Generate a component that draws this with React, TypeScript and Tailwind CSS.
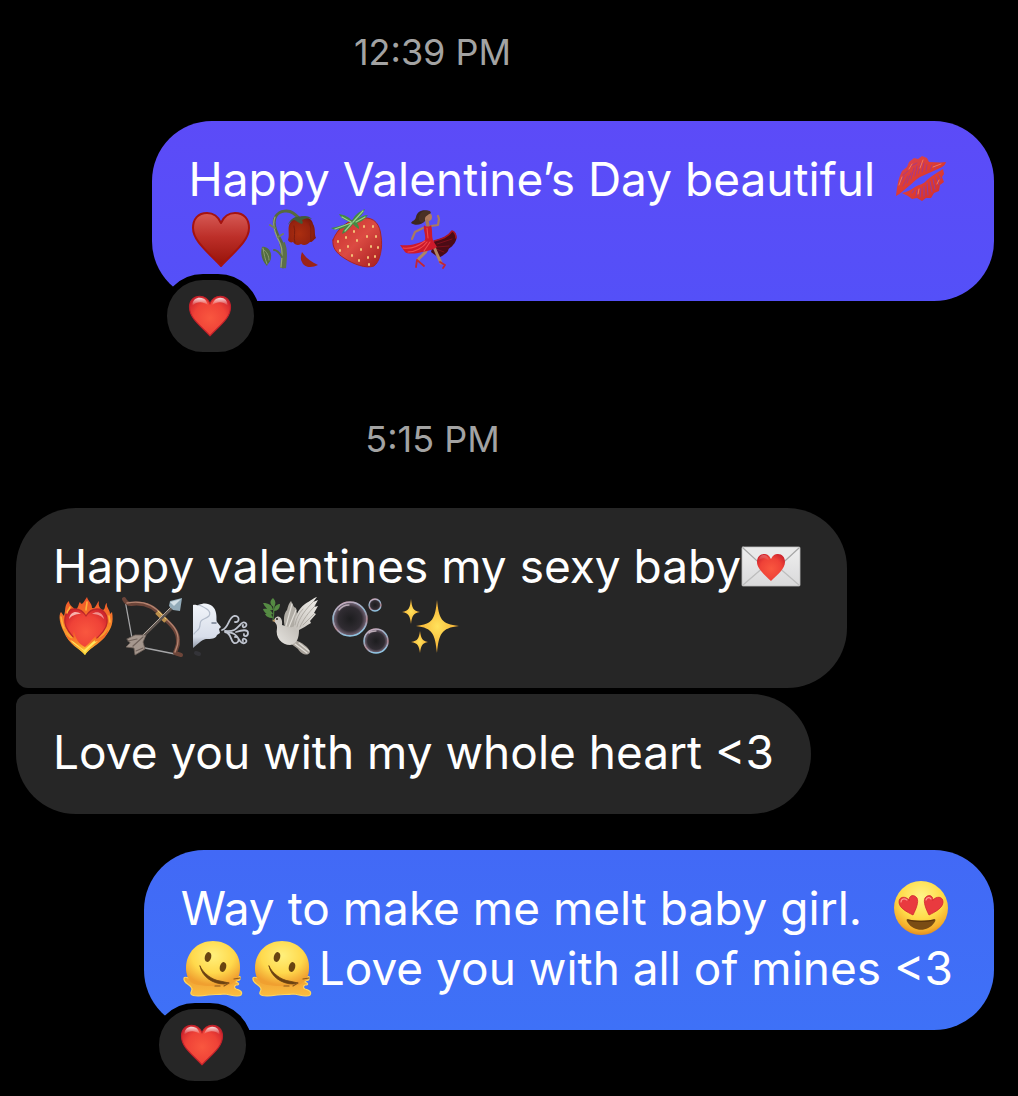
import type { ReactNode } from "react";

function Gradients() {
  return (
    <svg className="absolute size-0" aria-hidden="true">
      <defs>
        <linearGradient id="suit" x1="0" y1="0" x2="0" y2="1">
          <stop offset="0" stopColor="#d65a55" />
          <stop offset=".45" stopColor="#bd2f29" />
          <stop offset="1" stopColor="#961208" />
        </linearGradient>
        <radialGradient id="gloss" cx=".5" cy=".55" r=".65">
          <stop offset="0" stopColor="#f9573f" />
          <stop offset=".6" stopColor="#ef4237" />
          <stop offset="1" stopColor="#c9202b" />
        </radialGradient>
        <linearGradient id="shine" x1="0" y1="0" x2="0" y2="1">
          <stop offset="0" stopColor="#fff" stopOpacity=".85" />
          <stop offset="1" stopColor="#fff" stopOpacity="0" />
        </linearGradient>
        <radialGradient id="face" cx=".5" cy=".3" r=".72">
          <stop offset="0" stopColor="#fff58a" />
          <stop offset=".55" stopColor="#ffdc4a" />
          <stop offset=".85" stopColor="#f5ae2c" />
          <stop offset="1" stopColor="#dd8520" />
        </radialGradient>
        <radialGradient id="melt" cx=".5" cy=".32" r=".65">
          <stop offset="0" stopColor="#fff07c" />
          <stop offset=".6" stopColor="#ffd94c" />
          <stop offset="1" stopColor="#f0a030" />
        </radialGradient>
        <linearGradient id="puddle" x1="0" y1="0" x2="0" y2="1">
          <stop offset="0" stopColor="#efa032" />
          <stop offset="1" stopColor="#fbbd40" />
        </linearGradient>
        <linearGradient id="flame" x1="0" y1="0" x2="0" y2="1">
          <stop offset="0" stopColor="#f0532a" />
          <stop offset=".5" stopColor="#f98528" />
          <stop offset="1" stopColor="#ffe03a" />
        </linearGradient>
        <linearGradient id="berry" x1="0" y1="0" x2="1" y2="1">
          <stop offset="0" stopColor="#c92f2d" />
          <stop offset=".5" stopColor="#db4a42" />
          <stop offset="1" stopColor="#a51d1e" />
        </linearGradient>
        <linearGradient id="lips" x1="0" y1="0" x2="1" y2="1">
          <stop offset="0" stopColor="#d8485a" />
          <stop offset=".5" stopColor="#dd3b32" />
          <stop offset="1" stopColor="#c92d35" />
        </linearGradient>
        <radialGradient id="rose" cx=".4" cy=".6" r=".7">
          <stop offset="0" stopColor="#ab2e10" />
          <stop offset=".6" stopColor="#96230f" />
          <stop offset="1" stopColor="#6e150b" />
        </radialGradient>
        <radialGradient id="film" cx=".5" cy=".5" r=".5">
          <stop offset="0" stopColor="#1d1d1f" />
          <stop offset=".7" stopColor="#302c32" />
          <stop offset=".92" stopColor="#6b5d6c" />
          <stop offset="1" stopColor="#9cb9cf" />
        </radialGradient>
        <linearGradient id="rim" x1="0" y1="0" x2=".3" y2="1">
          <stop offset="0" stopColor="#d9a4b4" />
          <stop offset=".45" stopColor="#8eb8d0" />
          <stop offset=".75" stopColor="#b7848e" />
          <stop offset="1" stopColor="#8fc4e2" />
        </linearGradient>
        <linearGradient id="paper" x1="0" y1="0" x2="0" y2="1">
          <stop offset="0" stopColor="#efefef" />
          <stop offset="1" stopColor="#d9d9da" />
        </linearGradient>
        <linearGradient id="feather" x1="1" y1="0" x2="0" y2="1">
          <stop offset="0" stopColor="#f1efeb" />
          <stop offset=".6" stopColor="#c6c2bc" />
          <stop offset="1" stopColor="#e9e7e3" />
        </linearGradient>
        <linearGradient id="cloud" x1="0" y1="0" x2="0" y2="1">
          <stop offset="0" stopColor="#f2f5fa" />
          <stop offset=".75" stopColor="#d8deea" />
          <stop offset="1" stopColor="#8f98a6" />
        </linearGradient>
        <radialGradient id="gold" cx=".5" cy=".5" r=".5">
          <stop offset="0" stopColor="#ffe25c" />
          <stop offset="1" stopColor="#f6ac2f" />
        </radialGradient>
      </defs>
    </svg>
  );
}

function Emoji({ label, children }: { label: string; children: ReactNode }) {
  return (
    <svg
      role="img"
      aria-label={label}
      viewBox="0 0 60 60"
      className="mr-2 ml-px size-[60px] shrink-0 overflow-visible"
      fill="none"
      strokeLinecap="round"
      strokeLinejoin="round"
    >
      {children}
    </svg>
  );
}

const HEART =
  "M30 13C27 6 22 3 16 3C8 3 2 9 2 18C2 33 17 43 30 57C43 43 58 33 58 18C58 9 52 3 44 3C38 3 33 6 30 13Z";

function GlossHeart() {
  return (
    <>
      <path d={HEART} fill="url(#gloss)" stroke="#c0212b" strokeWidth="1.5" />
      <path d="M6 16C6 8 11 5 16 5C23 5 26 10 27 15C20 10 12 10 6 16Z" fill="url(#shine)" />
      <path d="M33 15C34 10 38 5 44 5C50 5 54 9 54 16C48 10 40 10 33 15Z" fill="url(#shine)" />
    </>
  );
}

const Kiss = () => (
  <Emoji label="Kiss mark">
    <path d="M7 47C8 38 9 30 13 22L18 18L20 13L25 9L29 10L33 7L38 9L40 13C46 13 52 14 57 13C56 17 53 18 49 20C43 23 37 25 31 28C26 31 24 34 20 37C15 41 11 45 7 47Z" fill="url(#lips)" />
    <path d="M13 44C18 43 22 41 26 38C31 35 34 36 38 31C42 27 48 24 54 20L55 25L53 28L55 33L51 36L50 42L45 44L42 49L37 49L33 52L28 49L23 50L19 47Z" fill="url(#lips)" />
    <path d="M11 34L15 27M14 37L19 27M18 34L22 24M22 30L25 19M26 27L28 17M29 25L32 14M33 23L35 14M37 22L38 16M41 21L43 16M46 19L47 16M14 26L19 22M22 17L28 14" stroke="#9c3795" strokeWidth=".8" />
    <path d="M23 44L25 41M27 47L28 41M31 48L32 39M35 47L35 37M39 46L38 34M43 43L41 32M46 40L44 30M50 36L47 28M52 30L50 26" stroke="#8a3cab" strokeWidth=".9" />
    <path d="M10 36L13 28M20 20L23 15M31 19L34 11M44 18L52 15M29 45L30 40M48 35L50 31" stroke="#f0785d" strokeWidth="1" />
  </Emoji>
);

const HeartSuit = () => (
  <Emoji label="Heart suit">
    <path d="M31 14C28 7 23 4 17 4C8 4 3 10 3 19C3 32 18 43 31 57C44 43 59 32 59 19C59 10 54 4 45 4C39 4 34 7 31 14Z" fill="url(#suit)" stroke="#a5130f" strokeWidth="2" />
  </Emoji>
);

const WiltedRose = () => (
  <Emoji label="Wilted flower">
    <path d="M24 58C25 46 25 38 22 32C16 22 13 13 17 7C21 1 30 1 34 4C37 6 39 8 41 10" stroke="#56693f" strokeWidth="3" />
    <path d="M24 59C25 49 26 42 23 34" stroke="#5d7048" strokeWidth="6" strokeLinecap="butt" />
    <path d="M22 58C23 48 24 41 21 34C16 25 13 15 16 8" stroke="#96a47c" strokeWidth="1.2" />
    <path d="M16 19L11 16M19 28L24 25" stroke="#72815a" strokeWidth="2" />
    <path d="M23 48C20 43 18 41 15 41" stroke="#586b44" strokeWidth="2" />
    <path d="M3 38C8 37 13 42 12 48C12 53 9 54 8 57C3 52 1 45 3 38Z" fill="#526b3f" />
    <path d="M4 39C5 45 6 50 8 55M4 40C8 43 10 47 10 51" stroke="#8a9b72" strokeWidth="1" />
    <path d="M34 10C42 5 53 8 54 15C57 20 55 25 57 29C54 31 54 33 51 33C48 36 45 37 42 35C39 37 36 36 34 33C32 34 30 33 29 31C31 26 28 19 31 14Z" fill="url(#rose)" />
    <path d="M35 17C37 23 34 28 36 34M51 15C53 21 51 26 52 32" stroke="#7d1c0d" strokeWidth="1" />
    <path d="M29 16C31 10 36 7 41 8C46 6 50 7 53 10C48 9 45 10 43 11C44 13 44 14 43 15C39 14 37 11 35 11C32 12 31 13 29 16Z" fill="#405c3b" />
    <path d="M43 43C47 49 52 53 59 56C53 59 45 59 43 53C41 50 42 46 43 43Z" fill="#9b2318" />
  </Emoji>
);

const Strawberry = () => (
  <Emoji label="Strawberry">
    <path d="M5 31C9 20 20 10 35 9C47 8 52 16 53 27C55 38 52 53 46 57C38 60 25 55 16 49C8 44 4 38 5 31Z" fill="url(#berry)" stroke="#a82426" />
    <path d="M10 32v1M18 28v1M26 22v1M36 17v1M45 17v1M20 37v1M29 31v1M39 27v1M48 27v1M12 41v1M24 46v1M33 40v1M43 37v1M50 38v1M31 51v1M40 48v1M47 47v1M41 55v1" stroke="#f3c077" strokeWidth="2" />
    <path d="M24 14C20 12 14 11 11 5C17 6 21 8 24 12C26 7 30 3 37 0C35 5 32 8 29 10C33 8 36 6 40 6C37 10 33 13 29 14C31 17 31 18 31 20C28 18 26 17 25 15C22 19 19 23 14 25C15 21 16 19 18 18C13 20 8 22 3 19C9 18 17 15 24 14Z" fill="#438a43" />
    <path d="M25 13L35 2M23 14L7 20M24 14L17 22M28 13L37 8M23 13L14 8" stroke="#9bcf8c" strokeWidth="1.2" />
  </Emoji>
);

const Dancer = () => (
  <Emoji label="Woman dancing">
    <path d="M26 19L18 23L15 30M34 17L41 16L42 10L41 7" stroke="#a97a60" strokeWidth="2.2" />
    <path d="M32 2C25 0 20 3 19 8C18 12 16 11 14 14C18 17 25 16 28 12Z" fill="#3d271f" />
    <circle cx="31" cy="8" r="4" fill="#b07c60" />
    <path d="M33 2C27 0 21 4 22 11C24 15 28 14 28 10C28 7 31 6 34 4Z" fill="#4a3025" />
    <path d="M30 12L31 17" stroke="#a5765a" strokeWidth="3.5" />
    <path d="M37 32C45 29 51 28 54 23C55 21 57 22 58 24C61 28 59 33 56 36C54 39 52 38 51 42C48 46 44 47 42 49L34 43Z" fill="#4b0b15" />
    <path d="M37 32C45 30 51 28 55 22C58 23 59 26 59 29" stroke="#a81524" strokeWidth="1.5" />
    <path d="M40 35L55 30M40 38L52 37M39 40L47 43" stroke="#7c101c" strokeWidth="1" />
    <path d="M30 40C29 45 24 46 21 51M37 38L40 45L44 54" stroke="#b08362" strokeWidth="3" />
    <path d="M27 16C28 18 33 18 34 16C36 22 34 29 37 33L40 38C36 41 30 42 25 43C18 45 10 45 8 43L3 36C12 37 22 35 28 31C29 26 26 21 27 16Z" fill="#cd1a2b" />
    <path d="M28 32C22 37 14 40 6 39M30 33C26 39 18 43 11 43M33 33L27 42M30 19L31 29" stroke="#ef4a4f" strokeWidth="1.1" />
    <path d="M20 51L27 57M20 51L19 58M43 53L48 56L46 59" stroke="#c22734" strokeWidth="1.8" />
  </Emoji>
);

const LoveLetter = () => (
  <Emoji label="Love letter">
    <rect x="0" y="11" width="58" height="39" rx="1" fill="url(#paper)" stroke="#bcbcbc" strokeWidth=".8" />
    <path d="M1 49L23 30M57 49L35 30" stroke="#bdbdbd" strokeWidth="1.2" />
    <path d="M1 12L25 34C28 36 30 36 33 34L57 12" fill="#e9e9e9" stroke="#a6a6a6" strokeWidth="1.2" />
    <path d="M29 23C27 19 25 18 22 18C18 18 15 21 15 26C15 33 23 39 29 45C35 39 43 33 43 26C43 21 40 18 36 18C33 18 31 19 29 23Z" fill="url(#gloss)" />
    <path d="M17 24C17 20 20 19 22 19C25 19 27 22 27 25C23 21 20 22 17 24Z" fill="url(#shine)" opacity=".3" />
  </Emoji>
);

const HeartOnFire = () => (
  <Emoji label="Heart on fire">
    <path d="M31 59C27 53 14 47 10 36C6 29 4 19 7 16L10 20C12 14 10 9 15 5C15 10 20 11 21 14C25 12 24 8 26 6C28 10 29 7 33 1C34 5 38 7 38 12C42 13 42 8 45 5C44 10 46 13 49 14C52 13 50 9 53 7C52 12 56 13 56 18L58 16C60 26 57 33 53 38C47 46 34 53 31 59Z" fill="url(#flame)" />
    <path d="M32 20C29 15 26 13 21 13C13 13 10 19 11 27C12 37 25 45 31 55C38 45 52 37 53 27C54 19 50 13 43 13C38 13 35 15 32 20Z" fill="url(#gloss)" stroke="#bd2729" strokeWidth="1.3" />
    <path d="M15 23C16 16 22 14 27 18C21 18 17 20 15 23Z" fill="#ffd1c9" opacity=".8" />
    <path d="M38 18C43 14 49 17 50 23C47 19 42 18 38 18Z" fill="#ffd1c9" opacity=".6" />
    <path d="M31 59C26 53 14 48 11 37C14 41 17 43 19 42C21 40 18 39 20 35C21 42 25 48 31 51C35 48 37 44 42 40C41 43 43 43 45 42C49 40 52 37 54 34C53 45 37 50 31 59Z" fill="url(#flame)" />
    <path d="M31 57C28 52 20 49 16 44C21 46 24 50 30 54C34 51 37 47 41 44C40 46 41 46 44 45C39 49 34 52 31 57Z" fill="#ffe85a" />
    <path d="M7 21C8 25 8 29 10 32M16 11C15 14 13 15 13 17M33 6C33 9 32 11 32 14M55 20L56 26" stroke="#ffb13b" strokeWidth="1.6" />
  </Emoji>
);

const BowAndArrow = () => (
  <Emoji label="Bow and arrow">
    <path d="M2 4L9 42L22 52L57 59" stroke="#a5a5a7" strokeWidth="1.3" />
    <path d="M1 3C3 7 5 8 8 8C22 6 32 11 39 21C47 27 55 35 55 44C56 51 52 54 52 57L58 59" stroke="#6d4539" strokeWidth="4" />
    <path d="M4 7C20 4 31 9 39 19C49 28 56 34 55 45C55 50 53 53 52 56" stroke="#b38370" strokeWidth="1.4" />
    <path d="M34 16L43 25" stroke="#bc8f4b" strokeWidth="5" strokeLinecap="butt" />
    <path d="M35 15L43 23" stroke="#e9ca78" strokeWidth="1" />
    <path d="M10 50L51 10" stroke="#605650" strokeWidth="3" />
    <path d="M10 49L50 9" stroke="#b4aaa1" strokeWidth="1" />
    <path d="M4 43L12 39L23 39L20 46L22 53L12 59L11 52L3 51L7 47Z" fill="#a5978e" stroke="#71635c" strokeWidth=".8" />
    <path d="M10 50L20 41M5 45L14 43M13 55L20 52" stroke="#71635c" strokeWidth="1.2" />
    <path d="M59 2L57 15L50 14L46 10L47 5Z" fill="#92abb9" />
    <path d="M58 3L51 10L47 6Z" fill="#d4e1e8" />
  </Emoji>
);

const WindFace = () => (
  <Emoji label="Wind face">
    <path d="M1 9C4 8 5 10 7 9C14 5 23 9 24 17C25 22 24 24 25 26L29 31L27 33L28 37L25 39C24 43 19 43 14 43C9 44 6 48 1 52Z" fill="url(#cloud)" />
    <path d="M7 9C14 12 20 15 17 20C13 24 8 22 8 29C8 35 4 34 2 38" stroke="#b3bccb" strokeWidth="1.2" />
    <path d="M20 27L24 27" stroke="#747f90" strokeWidth="1.5" />
    <path d="M30 34C37 32 36 22 42 20C48 19 48 27 43 26M33 35C43 36 45 32 48 29C52 23 57 29 53 31C51 32 50 30 51 29M33 36C40 37 38 45 42 47C48 48 48 40 43 41M34 36C43 36 46 41 48 45C52 50 57 45 53 43C51 42 50 44 51 45M44 36C50 34 56 33 56 37C56 41 51 41 52 38" stroke="#c0c5d0" strokeWidth="1.8" />
    <path d="M4 57L7 58" stroke="#333338" strokeWidth="4" />
  </Emoji>
);

const Dove = () => (
  <Emoji label="Dove">
    <path d="M12 24C13 16 13 9 12 4" stroke="#4a7a3d" strokeWidth="1.3" />
    <path d="M13 11C9 9 8 5 12 2C15 5 15 8 13 11ZM12 14C7 15 4 11 2 7C8 7 11 9 12 14ZM12 18C6 20 3 16 2 13C8 12 10 14 12 18ZM13 15C13 10 16 8 19 8C19 12 17 15 13 15ZM12 22C7 22 5 20 4 18C9 17 11 18 12 22Z" fill="#558a43" />
    <path d="M24 31C22 24 23 17 26 14C27 10 28 7 30 5L33 11L35 12L36 18L32 34Z" fill="#b0aca5" />
    <path d="M25 30L31 8M28 31L35 14" stroke="#e0ddd7" strokeWidth="1.2" />
    <path d="M34 44C40 46 48 51 49 56C47 61 40 58 37 53L29 47Z" fill="#a9a39b" />
    <path d="M34 48L46 57M38 47L48 55" stroke="#e2dfd9" strokeWidth="1.2" />
    <path d="M14 22C18 18 22 22 21 29C26 30 30 33 33 30C33 22 37 13 44 8C49 5 54 1 56 1L52 6L57 4L53 11L57 10L53 17L55 18L49 25L50 27C45 30 42 32 38 34C38 42 36 48 29 49C21 49 14 42 16 32C16 28 15 28 13 25Z" fill="url(#feather)" />
    <path d="M36 31C38 22 44 14 53 5M39 31C42 24 47 17 54 10M42 29L53 18M34 29C35 23 38 17 42 13" stroke="#aaa69f" strokeWidth=".9" />
    <circle cx="16" cy="23" r="1" fill="#29231f" />
    <path d="M14 23L11 25L14 26" fill="#c39d71" />
  </Emoji>
);

const Bubbles = () => (
  <Emoji label="Bubbles">
    <circle cx="20" cy="23" r="17" fill="url(#film)" stroke="url(#rim)" strokeWidth="1.5" />
    <circle cx="45" cy="9" r="6" fill="url(#film)" stroke="url(#rim)" strokeWidth="1.3" />
    <circle cx="46" cy="45" r="12" fill="url(#film)" stroke="url(#rim)" strokeWidth="1.5" />
    <path d="M9 14C12 10 15 9 19 9M39 37C41 35 43 35 46 35" stroke="#e4d3de" strokeWidth="1.3" opacity=".7" />
  </Emoji>
);

const Sparkles = () => (
  <Emoji label="Sparkles">
    <path d="M38 4C40 23 42 28 60 30C42 32 40 38 38 57C36 38 34 32 17 30C34 28 36 23 38 4Z" fill="url(#gold)" />
    <path d="M12 3C13 12 14 15 21 16C14 17 13 20 12 28C11 20 10 17 3 16C10 15 11 12 12 3Z" fill="url(#gold)" />
    <path d="M21 35C22 42 23 45 29 46C23 47 22 50 21 57C20 50 19 47 12 46C19 45 20 42 21 35Z" fill="url(#gold)" />
  </Emoji>
);

const HeartEyes = () => (
  <Emoji label="Smiling face with heart eyes">
    <circle cx="32" cy="30" r="27" fill="url(#face)" />
    <path d="M20 22C17 18 10 18 10 24C10 30 18 34 24 37C27 31 30 24 28 20C25 16 20 17 20 22Z" fill="#e93a3f" stroke="#cf2830" strokeWidth=".8" />
    <path d="M44 22C47 18 54 18 54 24C54 30 46 34 40 37C37 31 34 24 36 20C39 16 44 17 44 22Z" fill="#e93a3f" stroke="#cf2830" strokeWidth=".8" />
    <path d="M12 24C12 21 15 20 18 22M37 22C38 19 41 19 42 21" stroke="#ff9b90" strokeWidth="1.2" />
    <path d="M18 41C25 43 39 43 46 41C47 42 46 44 45 45C39 54 25 54 19 45C18 44 17 42 18 41Z" fill="#7a4c14" />
    <path d="M19 42C26 44 38 44 45 42" stroke="#5b350c" strokeWidth="1.2" />
  </Emoji>
);

const Melting = () => (
  <Emoji label="Melting face">
    <path d="M2 40C3 38 6 40 9 41H54C56 38 59 38 58 40C59 43 54 42 54 44C57 45 58 47 54 47C52 48 52 50 54 51C58 52 61 54 59 57C55 60 47 56 42 56C36 57 31 56 26 57C20 58 11 59 9 56C8 53 12 52 9 49C7 46 1 45 2 40Z" fill="url(#puddle)" stroke="#ffd65c" strokeWidth="1.2" />
    <path d="M4 30C4 14 16 3 31 3C46 3 58 14 58 29C58 36 57 39 54 42L50 46C44 49 17 49 10 45C6 42 4 36 4 30Z" fill="url(#melt)" />
    <ellipse cx="26" cy="19" rx="3.2" ry="5" fill="#684411" transform="rotate(14 26 19)" />
    <ellipse cx="41" cy="29" rx="3.2" ry="5" fill="#684411" transform="rotate(14 41 29)" />
    <path d="M18 28C21 35 30 42 38 43L47 45L42 46C31 46 20 39 18 28Z" fill="#6b4111" stroke="#6b4111" strokeWidth=".8" />
    <path d="M33 48L38 48M47 45L42 48M52 41L58 40" stroke="#8b571b" strokeWidth="1.2" />
  </Emoji>
);

function Line({ children }: { children: ReactNode }) {
  return <span className="flex h-[60px] items-center whitespace-pre">{children}</span>;
}

function Reaction() {
  return (
    <button
      type="button"
      aria-label="Reacted with red heart"
      className="absolute -bottom-[57px] left-[9px] flex h-[84px] w-[99px] items-center justify-center rounded-[42px] border-6 border-black bg-[#262626]"
    >
      <svg viewBox="0 0 60 60" className="size-[44px]" fill="none" aria-hidden="true">
        <GlossHeart />
      </svg>
    </button>
  );
}

function Bubble({ className, children }: { className: string; children: ReactNode }) {
  return <li className={`relative w-fit px-[37px] pt-7 pb-8 ${className}`}>{children}</li>;
}

function Time({ children }: { children: ReactNode }) {
  return (
    <time className="block pr-[145px] text-center text-[36px] leading-[44px] text-[#a3a3a3]">
      {children}
    </time>
  );
}

export default function App() {
  return (
    <main className="min-h-screen overflow-hidden bg-black pt-[30px] pr-6 pb-[66px] pl-4 font-['Inter',sans-serif] text-[46px] text-white">
      <Gradients />
      <Time>12:39 PM</Time>
      <ol className="mt-[47px] flex flex-col">
        <Bubble className="self-end rounded-[60px] bg-linear-to-b from-[#5c4bf8] to-[#5450f8]">
          <Line>
            {"Happy Valentine’s Day beautiful "}
            <Kiss />
          </Line>
          <Line>
            <HeartSuit />
            <WiltedRose />
            <Strawberry />
            <Dancer />
          </Line>
          <Reaction />
        </Bubble>
      </ol>
      <div className="mt-[116px]">
        <Time>5:15 PM</Time>
      </div>
      <ol className="mt-[47px] flex flex-col">
        <Bubble className="rounded-[60px] rounded-bl-xl bg-[#262626]">
          <Line>
            Happy valentines my sexy baby
            <LoveLetter />
          </Line>
          <Line>
            <HeartOnFire />
            <BowAndArrow />
            <WindFace />
            <Dove />
            <Bubbles />
            <Sparkles />
          </Line>
        </Bubble>
        <Bubble className="mt-1.5 rounded-[60px] rounded-tl-xl bg-[#262626]">
          <Line>{"Love you with my whole heart <3"}</Line>
        </Bubble>
        <Bubble className="mt-9 self-end rounded-[60px] bg-linear-to-b from-[#4269f6] to-[#3e71f7]">
          <Line>
            {"Way to make me melt baby girl.  "}
            <HeartEyes />
          </Line>
          <Line>
            <Melting />
            <Melting />
            {"Love you with all of mines <3"}
          </Line>
          <Reaction />
        </Bubble>
      </ol>
    </main>
  );
}
